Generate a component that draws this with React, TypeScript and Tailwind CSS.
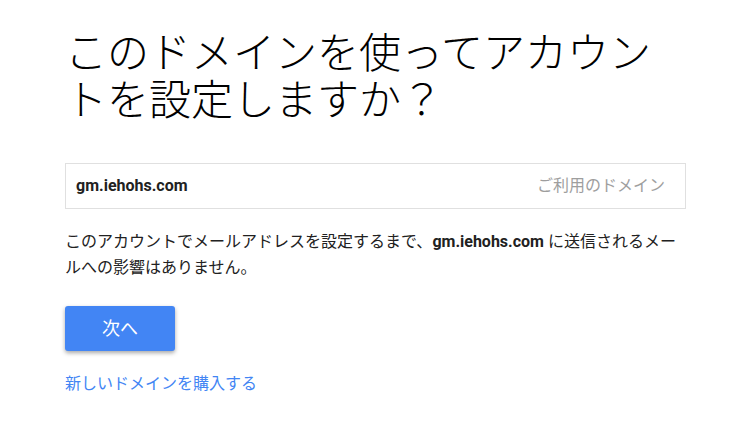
import React from 'react'

const font = { fontFamily: 'Roboto, "Noto Sans CJK JP", sans-serif' }

const App = () => {
  return (
    <div className="w-[735px] h-[445px] bg-white" style={font}>
      <div className="w-[621px] ml-[65px] pt-[30px]">
        <h1 className="text-[42px] leading-[47px] font-light text-black">
          このドメインを使ってアカウントを設定しますか？
        </h1>
        <div className="mt-[39px] h-[46px] border border-[#e0e0e0] flex items-center justify-between pl-[10px] pr-[20px]">
          <span className="text-[16px] font-bold text-[#212121]">gm.iehohs.com</span>
          <span className="text-[16px] text-[#9e9e9e]">ご利用のドメイン</span>
        </div>
        <p className="mt-[20px] text-[16px] leading-[26px] text-[#212121]">
          このアカウントでメールアドレスを設定するまで、<b className="font-bold">gm.iehohs.com</b> に送信されるメールへの影響はありません。
        </p>
        <button className="mt-[25px] w-[110px] h-[45px] rounded-[3px] bg-[#4285f4] text-white text-[18px] shadow-[0_2px_4px_rgba(0,0,0,0.35)]">
          次へ
        </button>
        <div className="mt-[21px]">
          <a className="text-[16px] text-[#4285f4]">新しいドメインを購入する</a>
        </div>
      </div>
    </div>
  )
}

export default App
